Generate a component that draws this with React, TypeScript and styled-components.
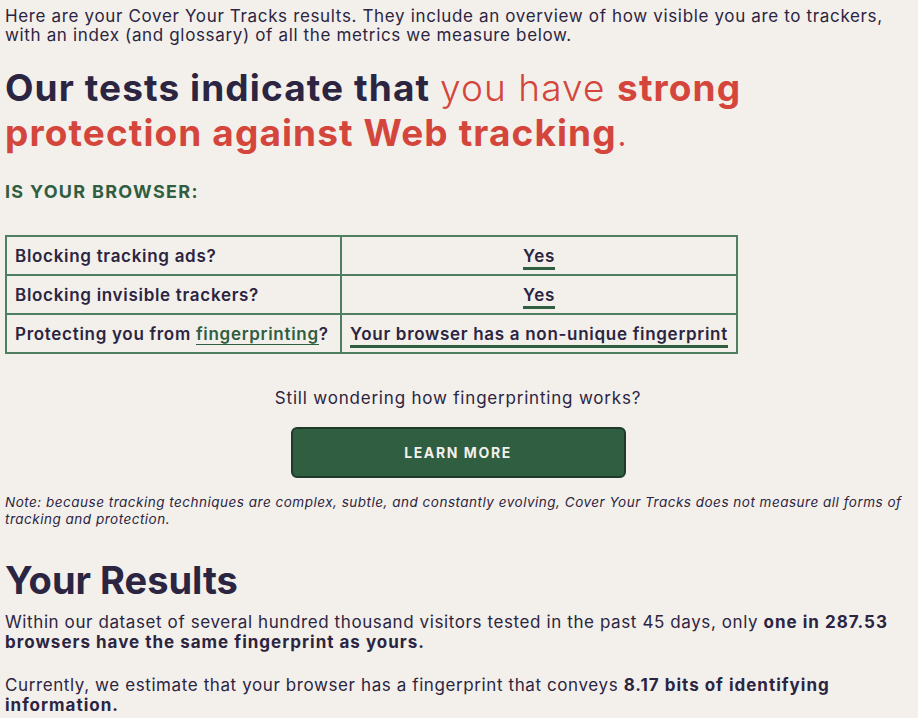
import React from "react";
import styled, { createGlobalStyle } from "styled-components";

const Global = createGlobalStyle`
  html, body { margin: 0; padding: 0; background: #f3efeb; }
  body { font-family: "Inter", "Liberation Sans", sans-serif; color: #2b2541; letter-spacing: 0.6px; }
`;

const Page = styled.main`
  width: 906px;
  padding: 0 5px;
`;

const Intro = styled.p`
  margin: 0;
  padding-top: 7px;
  font-size: 17px;
  line-height: 19px;
  font-weight: 400;
  letter-spacing: 0.65px;
`;

const Headline = styled.h1`
  margin: 20px 0 0;
  font-size: 37px;
  line-height: 45px;
  font-weight: 700;
  letter-spacing: 1.1px;
  color: #2b2541;
  max-width: 760px;
`;

const Red = styled.span<{ $bold?: boolean }>`
  color: #d4463c;
  font-weight: ${(p) => (p.$bold ? 700 : 300)};
`;

const Kicker = styled.h2`
  margin: 26px 0 0;
  font-size: 18px;
  line-height: 22px;
  font-weight: 700;
  letter-spacing: 1.3px;
  color: #2f5e41;
  text-transform: uppercase;
`;

const Table = styled.table`
  margin-top: 32px;
  border-collapse: collapse;
  width: 733px;
`;

const Cell = styled.td<{ $center?: boolean }>`
  border: 2px solid #4f7e61;
  padding: 0 8px;
  height: 37px;
  font-size: 17px;
  font-weight: 600;
  letter-spacing: 0.7px;
  text-align: ${(p) => (p.$center ? "center" : "left")};
  white-space: nowrap;
`;

const Answer = styled.span`
  border-bottom: 3px solid #2f5e41;
  padding-bottom: 1px;
`;

const Term = styled.span`
  color: #2f5e41;
  border-bottom: 1px solid #2f5e41;
`;

const Center = styled.div`
  display: flex;
  flex-direction: column;
  align-items: center;
  margin-top: 34px;
`;

const Wonder = styled.p`
  margin: 0;
  font-size: 17px;
  line-height: 20px;
  letter-spacing: 0.8px;
`;

const Button = styled.button`
  margin-top: 19px;
  width: 335px;
  height: 51px;
  background: #2f5e41;
  border: 2px solid #1f3a2a;
  border-radius: 6px;
  color: #f3efeb;
  font-family: inherit;
  font-size: 14px;
  font-weight: 700;
  letter-spacing: 1.6px;
`;

const Note = styled.p`
  margin: 16px 0 0;
  font-size: 13.5px;
  line-height: 16.5px;
  font-style: italic;
  letter-spacing: 0.5px;
`;

const ResultsTitle = styled.h2`
  margin: 30px 0 0;
  font-size: 38px;
  line-height: 46px;
  font-weight: 700;
  letter-spacing: 0;
`;

const Para = styled.p<{ $gap?: number }>`
  margin: ${(p) => p.$gap ?? 0}px 0 0;
  font-size: 17px;
  line-height: 20px;
  strong { font-weight: 700; letter-spacing: 1px; }
`;

export default function App() {
  return (
    <>
      <Global />
      <Page>
        <Intro>
          Here are your Cover Your Tracks results. They include an overview of how visible you are to trackers,
          with an index (and glossary) of all the metrics we measure below.
        </Intro>
        <Headline>
          Our tests indicate that <Red>you have </Red>
          <Red $bold>strong protection against Web tracking</Red>
          <Red>.</Red>
        </Headline>
        <Kicker>Is your browser:</Kicker>
        <Table>
          <tbody>
            <tr>
              <Cell style={{ width: 317 }}>Blocking tracking ads?</Cell>
              <Cell $center><Answer>Yes</Answer></Cell>
            </tr>
            <tr>
              <Cell>Blocking invisible trackers?</Cell>
              <Cell $center><Answer>Yes</Answer></Cell>
            </tr>
            <tr>
              <Cell>
                Protecting you from <Term>fingerprinting</Term>?
              </Cell>
              <Cell $center><Answer>Your browser has a non-unique fingerprint</Answer></Cell>
            </tr>
          </tbody>
        </Table>
        <Center>
          <Wonder>Still wondering how fingerprinting works?</Wonder>
          <Button>LEARN MORE</Button>
        </Center>
        <Note>
          Note: because tracking techniques are complex, subtle, and constantly evolving, Cover Your Tracks does not
          measure all forms of tracking and protection.
        </Note>
        <ResultsTitle>Your Results</ResultsTitle>
        <Para $gap={9}>
          Within our dataset of several hundred thousand visitors tested in the past 45 days, only{" "}
          <strong>one in 287.53 browsers have the same fingerprint as yours.</strong>
        </Para>
        <Para $gap={23}>
          Currently, we estimate that your browser has a fingerprint that conveys{" "}
          <strong>8.17 bits of identifying information.</strong>
        </Para>
      </Page>
    </>
  );
}
